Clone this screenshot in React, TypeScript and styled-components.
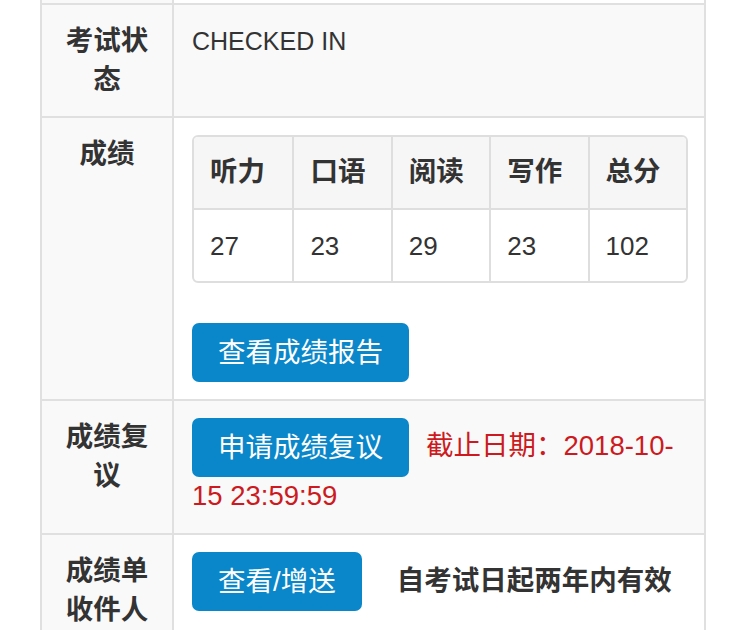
import { FC } from 'react'
import styled, { createGlobalStyle } from 'styled-components'

const GlobalStyle = createGlobalStyle`
  html, body {
    margin: 0;
    padding: 0;
    background: #fff;
  }
  body {
    font-family: 'Liberation Sans', 'Noto Sans CJK SC', sans-serif;
    font-size: 27.5px;
    line-height: 38.6px;
    color: #333;
  }
`

const Page = styled.div`
  padding-left: 40px;
  width: 666px;
`

const Sheet = styled.div`
  border-left: 2px solid #e0e0e0;
  border-right: 2px solid #e0e0e0;
`

const Row = styled.div<{ $striped?: boolean; $stub?: boolean }>`
  display: grid;
  grid-template-columns: 132px 1fr;
  border-bottom: 2px solid #e0e0e0;
  background: ${(p) => (p.$striped ? '#f9f9f9' : '#fff')};
  height: ${(p) => (p.$stub ? '3px' : 'auto')};
`

const Label = styled.div<{ $empty?: boolean }>`
  background: #f9f9f9;
  border-right: 2px solid #e0e0e0;
  padding: ${(p) => (p.$empty ? '0' : '17px 16px')};
  text-align: center;
  font-weight: bold;
`

const Value = styled.div`
  padding: 17px 16px 17px 18px;
  min-width: 0;
`

const Status = styled.span`
  font-size: 25px;
`

const ScoreTable = styled.table`
  width: 100%;
  table-layout: fixed;
  border-collapse: separate;
  border-spacing: 0;
  border: 2px solid #dedede;
  border-radius: 6px;
  overflow: hidden;
  margin-bottom: 40px;
`

const HeadCell = styled.th`
  background: #f6f6f6;
  text-align: left;
  font-weight: bold;
  padding: 16px;
  border-left: 2px solid #dedede;
  &:first-child {
    border-left: none;
  }
`

const ScoreCell = styled.td`
  text-align: left;
  font-size: 26px;
  padding: 17px 16px 16px;
  border-top: 2px solid #dedede;
  border-left: 2px solid #dedede;
  &:first-child {
    border-left: none;
  }
`

const Button = styled.span`
  display: inline-block;
  vertical-align: middle;
  padding: 10px 26px;
  line-height: 39px;
  background: #0a87ca;
  color: #fff;
  border-radius: 7px;
  white-space: nowrap;
`

const Deadline = styled.span`
  color: #cc1a20;
  margin-left: 17px;
`

const Note = styled.span`
  vertical-align: middle;
  font-weight: bold;
  margin-left: 35px;
`

type Score = { name: string; value: number }

const scores: Score[] = [
  { name: '听力', value: 27 },
  { name: '口语', value: 23 },
  { name: '阅读', value: 29 },
  { name: '写作', value: 23 },
  { name: '总分', value: 102 },
]

const Scores: FC<{ items: Score[] }> = ({ items }) => (
  <ScoreTable>
    <thead>
      <tr>
        {items.map((s) => (
          <HeadCell key={s.name}>{s.name}</HeadCell>
        ))}
      </tr>
    </thead>
    <tbody>
      <tr>
        {items.map((s) => (
          <ScoreCell key={s.name}>{s.value}</ScoreCell>
        ))}
      </tr>
    </tbody>
  </ScoreTable>
)

const App = () => {
  return (
    <Page>
      <GlobalStyle />
      <Sheet>
        <Row $stub>
          <Label $empty />
          <div />
        </Row>
        <Row $striped>
          <Label>考试状态</Label>
          <Value>
            <Status>CHECKED IN</Status>
          </Value>
        </Row>
        <Row>
          <Label>成绩</Label>
          <Value>
            <Scores items={scores} />
            <Button>查看成绩报告</Button>
          </Value>
        </Row>
        <Row $striped>
          <Label>成绩复议</Label>
          <Value>
            <Button>申请成绩复议</Button>
            <Deadline>
              截止日期：2018-10-<wbr />15 23:59:59
            </Deadline>
          </Value>
        </Row>
        <Row>
          <Label>成绩单收件人</Label>
          <Value>
            <Button>查看/增送</Button>
            <Note>自考试日起两年内有效</Note>
          </Value>
        </Row>
      </Sheet>
    </Page>
  )
}

export default App
